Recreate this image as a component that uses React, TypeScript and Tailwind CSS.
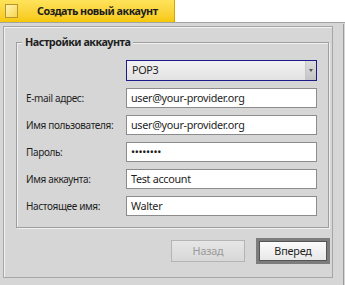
import React from 'react'

const font = { fontFamily: '"Noto Sans", "DejaVu Sans", sans-serif' }

const rows = [
  { label: 'E-mail адрес:', value: 'user@your-provider.org' },
  { label: 'Имя пользователя:', value: 'user@your-provider.org' },
  { label: 'Пароль:', value: '••••••••' },
  { label: 'Имя аккаунта:', value: 'Test account' },
  { label: 'Настоящее имя:', value: 'Walter' },
]

export default function App() {
  return (
    <div className="w-[345px] h-[285px] bg-[#d6d6d6] flex flex-col overflow-hidden text-[#1e1e1e]" style={font}>
      {/* tab bar */}
      <div className="h-[23px] bg-white flex border-b border-[#a4a4a4] shrink-0">
        <div className="w-[175px] h-full flex items-center gap-[19px] pl-[5px] bg-gradient-to-b from-[#ffe35a] to-[#f6c800] border-r border-[#d9a400]">
          <div className="w-[13px] h-[14px] bg-gradient-to-br from-[#fff3b0] to-[#f7d545] border border-[#b9962a]" />
          <span className="text-[10.8px] font-bold tracking-[-0.5px] leading-none">Создать новый аккаунт</span>
        </div>
      </div>

      {/* body */}
      <div className="flex-1 flex">
        <div className="flex-1 flex flex-col mt-[3px] ml-[3px] mb-[7px] border border-[#a6a6a6] shadow-[inset_1px_1px_0_#f2f2f2]">
          <div className="relative mt-[15px] ml-[12px] mr-[3px] border border-[#9e9e9e] shadow-[inset_1px_1px_0_#f0f0f0,1px_1px_0_#f0f0f0] pt-[17px] pb-[11px] pl-[9px] pr-[11px]">
            <span className="absolute -top-[8px] left-[5px] px-[3px] bg-[#d6d6d6] text-[10.8px] font-bold tracking-[-0.5px] leading-[14px]">
              Настройки аккаунта
            </span>
            <div className="grid grid-cols-[100px_1fr] gap-y-[7px] items-center">
              <div />
              <div className="h-[21px] flex items-center border border-[#1b1b8a] bg-gradient-to-b from-[#f2f2f2] to-[#e2e2e2]">
                <span className="flex-1 pl-[5px] text-[10.8px] tracking-[-0.3px]">POP3</span>
                <div className="w-[11px] h-full flex items-center justify-center bg-gradient-to-b from-[#dcdcdc] to-[#c4c4c4] border-l border-[#c8c8c8]">
                  <div className="w-0 h-0 border-l-[2.5px] border-r-[2.5px] border-t-[3px] border-l-transparent border-r-transparent border-t-[#555]" />
                </div>
              </div>
              {rows.map(r => (
                <React.Fragment key={r.label}>
                  <span className="text-[10px] tracking-[-0.35px] leading-none">{r.label}</span>
                  <div className="h-[20px] flex items-center bg-white border border-[#8c8c8c] pl-[4px] text-[10.8px] tracking-[-0.3px]">
                    {r.value}
                  </div>
                </React.Fragment>
              ))}
            </div>
          </div>

          <div className="flex justify-end items-center gap-[11px] mt-[10px] mr-[2px]">
            <div className="w-[74px] h-[22px] flex items-center justify-center border border-[#b4b4b4] bg-gradient-to-b from-[#e6e6e6] to-[#d8d8d8] text-[10.8px] tracking-[-0.2px] text-[#9a9a9a]">
              Назад
            </div>
            <div className="w-[74px] h-[26px] border-[3px] border-[#7c7c7c] bg-[#7c7c7c]">
              <div className="w-full h-full flex items-center justify-center border border-[#555] bg-gradient-to-b from-[#fbfbfb] to-[#e8e8e8] text-[10.8px] tracking-[-0.2px]">
                Вперед
              </div>
            </div>
          </div>
        </div>
        <div className="w-[12px] flex justify-end pr-[1px]">
          <div className="w-px mt-[1px] bg-[#9a9a9a]" />
        </div>
      </div>
    </div>
  )
}
